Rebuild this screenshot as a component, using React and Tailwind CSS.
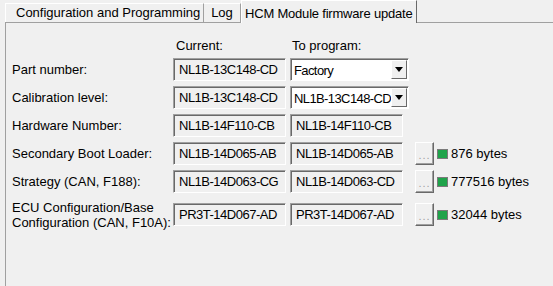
const font = "font-['Liberation_Sans',Arial,sans-serif]";

function Field({ value }) {
  return (
    <div className="h-[23px] w-[113px] flex items-center pl-[5px] bg-[#f0f0f0] border border-t-[#a0a0a0] border-l-[#a0a0a0] border-r-white border-b-white shadow-[inset_1px_1px_0_#696969]">
      <span className="whitespace-nowrap leading-none tracking-[-0.5px]">{value}</span>
    </div>
  );
}

function Combo({ value }) {
  return (
    <div className="h-[23px] w-[119px] flex bg-white border border-t-[#a0a0a0] border-l-[#a0a0a0] border-r-white border-b-white shadow-[inset_1px_1px_0_#696969]">
      <div className="flex-1 flex items-center pl-[3px] pt-[1px] overflow-hidden whitespace-nowrap leading-none tracking-[-0.6px]">
        {value}
      </div>
      <div className="w-[16px] shrink-0 mt-[1px] mb-[1px] mr-[1px] flex items-center justify-center bg-[#f0f0f0] border border-t-white border-l-white border-r-[#696969] border-b-[#696969]">
        <svg width="8" height="5" viewBox="0 0 8 5">
          <path d="M0 0H8L4 5Z" fill="#000" />
        </svg>
      </div>
    </div>
  );
}

function DotsButton() {
  return (
    <div className="ml-[12px] h-[23px] w-[19px] flex items-end justify-center pb-[3px] bg-[#f0f0f0] border border-t-white border-l-white border-r-[#696969] border-b-[#696969] shadow-[inset_-1px_-1px_0_#a0a0a0]">
      <span className="text-[#a0a0a0] leading-none text-[11px] tracking-[1px]">...</span>
    </div>
  );
}

function Size({ text }) {
  return (
    <div className="flex items-center">
      <DotsButton />
      <div className="ml-[3px] w-[11px] h-[10px] bg-[#1fa34a] border border-[#7a7a7a]" />
      <span className="ml-[3px] whitespace-nowrap">{text}</span>
    </div>
  );
}

function Row({ label, current, program, size, combo }) {
  return (
    <div className="flex items-center h-[23px] mt-[5px]">
      <div className="w-[161px] whitespace-nowrap">{label}</div>
      <Field value={current} />
      <div className="w-[4px]" />
      {combo ? <Combo value={program} /> : <Field value={program} />}
      {size && <Size text={size} />}
    </div>
  );
}

export default function App() {
  return (
    <div className={`w-[553px] h-[286px] bg-[#f0f0f0] overflow-hidden text-[13px] text-black ${font} flex flex-col`}>
      <div className="flex items-end h-[22px] pl-[5px]">
        <div className="h-[19px] w-[199px] flex items-center pl-[10px] border-t border-l border-white border-r border-r-[#a0a0a0] whitespace-nowrap">
          Configuration and Programming
        </div>
        <div className="h-[19px] w-[37px] flex items-center justify-center border-t border-white border-r border-r-[#a0a0a0]">
          Log
        </div>
        <div className="relative z-10 h-[23px] -mb-[1px] w-[176px] flex items-start pt-[3px] pl-[3px] bg-[#f0f0f0] border-t border-l border-white border-r border-r-[#696969] whitespace-nowrap tracking-[-0.2px]">
          HCM Module firmware update
        </div>
      </div>
      <div className="flex-1 ml-[5px] border-t border-l border-[#a0a0a0] pl-[6px]">
        <div className="flex h-[16px] mt-[14px] items-center leading-none">
          <div className="w-[164px]" />
          <div className="w-[116px]">Current:</div>
          <div>To program:</div>
        </div>
        <div className="mt-[1px]" />
        <Row label="Part number:" current="NL1B-13C148-CD" program="Factory" combo />
        <Row label="Calibration level:" current="NL1B-13C148-CD" program="NL1B-13C148-CD" combo />
        <Row label="Hardware Number:" current="NL1B-14F110-CB" program="NL1B-14F110-CB" />
        <Row label="Secondary Boot Loader:" current="NL1B-14D065-AB" program="NL1B-14D065-AB" size="876 bytes" />
        <Row label="Strategy (CAN, F188):" current="NL1B-14D063-CG" program="NL1B-14D063-CD" size="777516 bytes" />
        <div className="flex items-start mt-[7px]">
          <div className="w-[161px] leading-[15px]">
            ECU Configuration/Base
            <br />
            Configuration (CAN, F10A):
          </div>
          <div className="flex items-center mt-[3px]">
            <Field value="PR3T-14D067-AD" />
            <div className="w-[4px]" />
            <Field value="PR3T-14D067-AD" />
            <Size text="32044 bytes" />
          </div>
        </div>
      </div>
    </div>
  );
}
